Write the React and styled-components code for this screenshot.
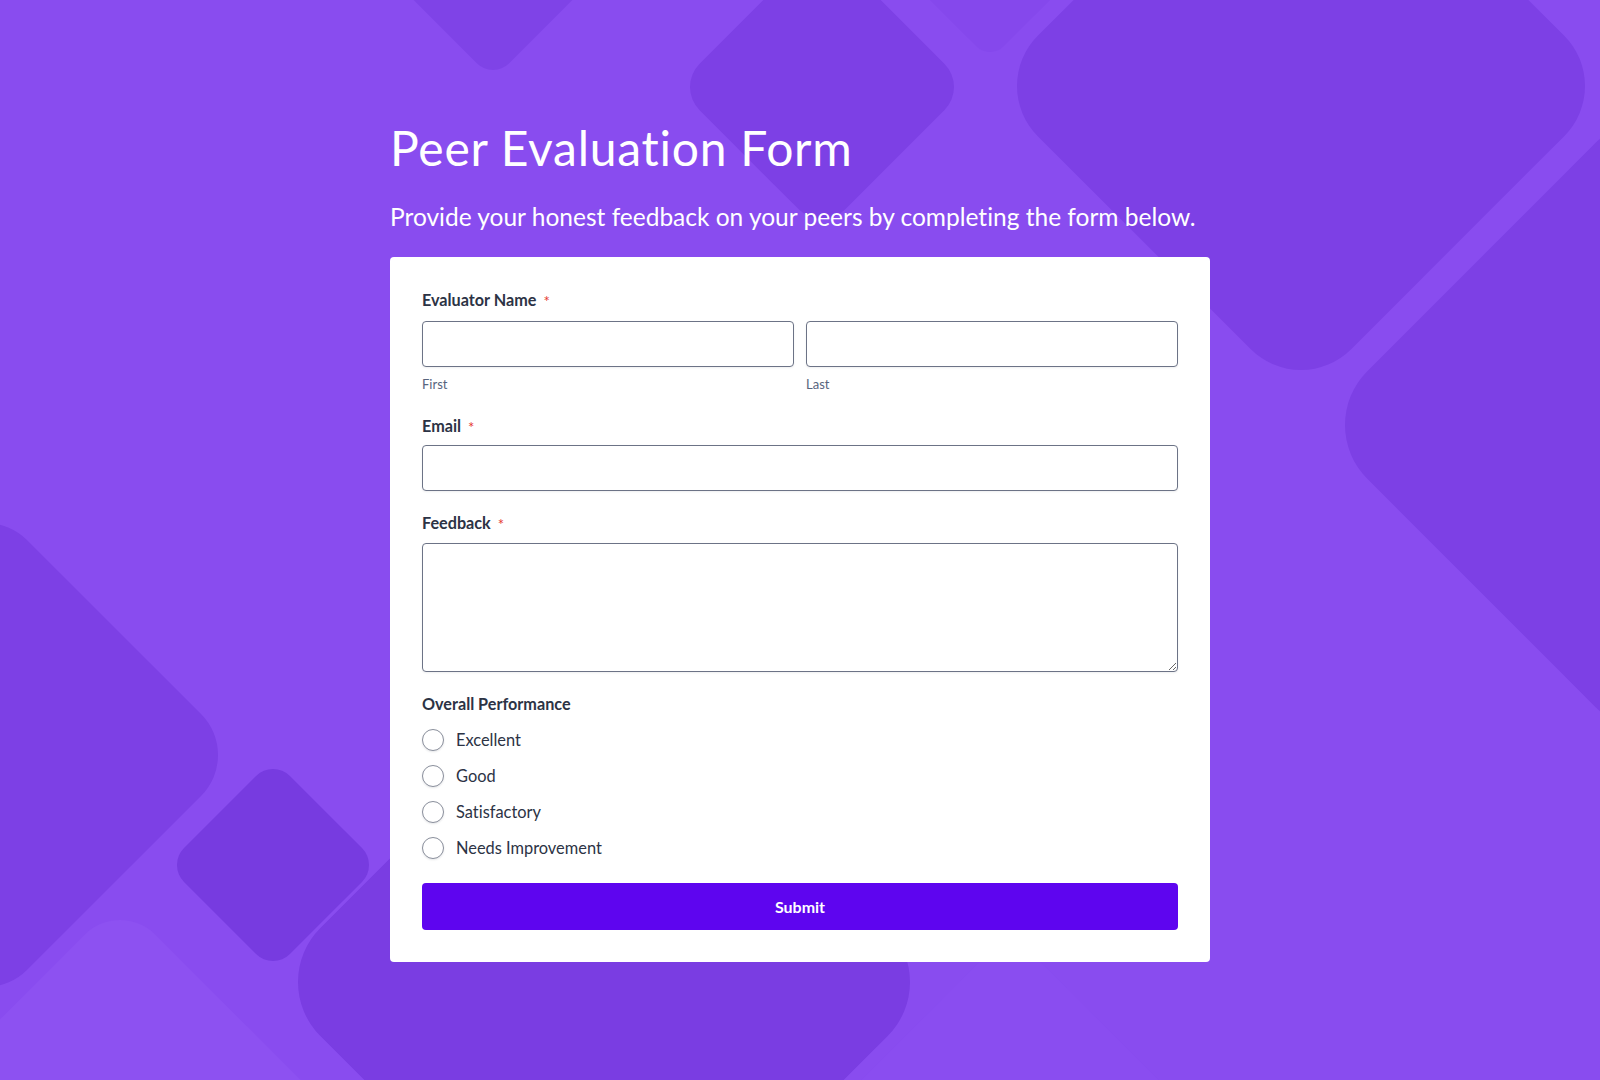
import React from "react";
import styled, { createGlobalStyle } from "styled-components";

const base = "#894cef";
const shade = "#7d40e5";
const ink = "#2c3345";
const muted = "#57647e";
const line = "#6c7386";
const brand = "#5e05ef";

const GlobalStyle = createGlobalStyle`
    html, body {
        margin:0;
        padding:0;
    }
    body {
        background:${base};
        font-family:Lato, "Noto Sans", sans-serif;
        font-variant-ligatures:none;
        color:${ink};
    }
`;

const Page = styled.div`
    position:relative;
    min-height:1080px;
    overflow:hidden;
`;

const Backdrop = styled.svg`
    position:absolute;
    top:0;
    left:0;
    width:1600px;
    height:1080px;
    z-index:0;
`;

const Wrap = styled.main`
    position:relative;
    z-index:1;
    width:820px;
    margin:0 auto;
    padding-top:119px;
    padding-bottom:100px;
`;

const Title = styled.h1`
    margin:0;
    font-size:48px;
    font-weight:400;
    line-height:1.2;
    letter-spacing:0.75px;
    color:#fff;
`;

const Lead = styled.p`
    margin:25px 0 0;
    font-size:24.5px;
    font-weight:400;
    line-height:1.2;
    color:#fff;
`;

const Card = styled.form`
    margin-top:26px;
    background:#fff;
    border-radius:4px;
    padding:33px 32px 32px;
    display:flex;
    flex-direction:column;
`;

const Field = styled.div`
    display:flex;
    flex-direction:column;
    margin-bottom:${props => props.gap || "22px"};
`;

const Label = styled.label`
    display:block;
    height:20px;
    font-size:16.2px;
    font-weight:700;
    line-height:20px;
    color:${ink};
    margin-bottom:${props => props.space || "10px"};
`;

const Star = styled.span`
    color:#e5372f;
    font-size:15px;
    font-weight:400;
    line-height:0;
    margin-left:7px;
    vertical-align:-1px;
`;

const Pair = styled.div`
    display:grid;
    grid-template-columns:1fr 1fr;
    column-gap:12px;
`;

const Part = styled.div`
    display:flex;
    flex-direction:column;
`;

const Input = styled.input`
    box-sizing:border-box;
    width:100%;
    height:46px;
    border:1px solid ${line};
    border-radius:4px;
    padding:0 12px;
    font:inherit;
    font-size:16px;
    background:#fff;
    box-shadow:0 1px 2px rgba(44, 51, 69, 0.08);
    outline:none;
`;

const Area = styled.textarea`
    box-sizing:border-box;
    width:100%;
    height:129px;
    border:1px solid ${line};
    border-radius:4px;
    padding:10px 12px;
    font:inherit;
    font-size:16px;
    background:#fff;
    box-shadow:0 1px 2px rgba(44, 51, 69, 0.08);
    outline:none;
    display:block;
`;

const Sub = styled.span`
    margin-top:9px;
    height:16px;
    font-size:13px;
    line-height:16px;
    color:${muted};
`;

const Options = styled.div`
    display:flex;
    flex-direction:column;
`;

const Option = styled.label`
    display:flex;
    align-items:center;
    height:36px;
    gap:12px;
    font-size:16.4px;
    line-height:20px;
    color:${ink};
    cursor:pointer;
`;

const Radio = styled.input`
    appearance:none;
    margin:0;
    width:22px;
    height:22px;
    border:1px solid #8a8f9c;
    border-radius:50%;
    background:#fff;
    box-shadow:0 1px 2px rgba(44, 51, 69, 0.12);
    flex:none;
    &:checked {
        border:6px solid ${brand};
    }
`;

const Submit = styled.button`
    margin-top:17px;
    height:47px;
    border:none;
    border-radius:4px;
    background:${brand};
    color:#fff;
    font-family:inherit;
    font-size:16px;
    font-weight:700;
    cursor:pointer;
`;

// rounded diamonds of the backdrop: centre x, centre y, distance to visible tip, fill
const shapes = [
    [493, -20, 90, "#7f43e7"],
    [990, -26, 78, "#8548ec"],
    [822, 87, 132, shade],
    [1301, 86, 284, shade],
    [1650, 425, 305, shade],
    [-14, 755, 232, shade],
    [604, 982, 306, "#7a3de2"],
    [273, 865, 96, "#773be0"],
    [120, 1120, 200, "#8d51f1"],
    [1010, 1130, 180, "#8a4df0"]
];

const corner = 0.16;

function Diamond({ x, y, tip, fill }) {
    const s = tip / (Math.SQRT1_2 - corner * (Math.SQRT2 - 1));
    return (
        <rect
            x={x - s / 2}
            y={y - s / 2}
            width={s}
            height={s}
            rx={s * corner}
            fill={fill}
            transform={`rotate(45 ${x} ${y})`}
        />
    );
}

const ratings = ["Excellent", "Good", "Satisfactory", "Needs Improvement"];

export default function App() {
    return (
        <Page>
            <GlobalStyle />
            <Backdrop viewBox="0 0 1600 1080" aria-hidden="true">
                {shapes.map(([x, y, tip, fill], i) => (
                    <Diamond key={i} x={x} y={y} tip={tip} fill={fill} />
                ))}
            </Backdrop>
            <Wrap>
                <Title>Peer Evaluation Form</Title>
                <Lead>Provide your honest feedback on your peers by completing the form below.</Lead>
                <Card onSubmit={e => e.preventDefault()}>
                    <Field gap="24px">
                        <Label space="11px">Evaluator Name<Star>*</Star></Label>
                        <Pair>
                            <Part>
                                <Input type="text" />
                                <Sub>First</Sub>
                            </Part>
                            <Part>
                                <Input type="text" />
                                <Sub>Last</Sub>
                            </Part>
                        </Pair>
                    </Field>
                    <Field>
                        <Label space="9px">Email<Star>*</Star></Label>
                        <Input type="email" />
                    </Field>
                    <Field>
                        <Label>Feedback<Star>*</Star></Label>
                        <Area />
                    </Field>
                    <Field gap="0">
                        <Label space="8px">Overall Performance</Label>
                        <Options>
                            {ratings.map(r => (
                                <Option key={r}>
                                    <Radio type="radio" name="performance" value={r} />
                                    {r}
                                </Option>
                            ))}
                        </Options>
                    </Field>
                    <Submit type="submit">Submit</Submit>
                </Card>
            </Wrap>
        </Page>
    );
}
